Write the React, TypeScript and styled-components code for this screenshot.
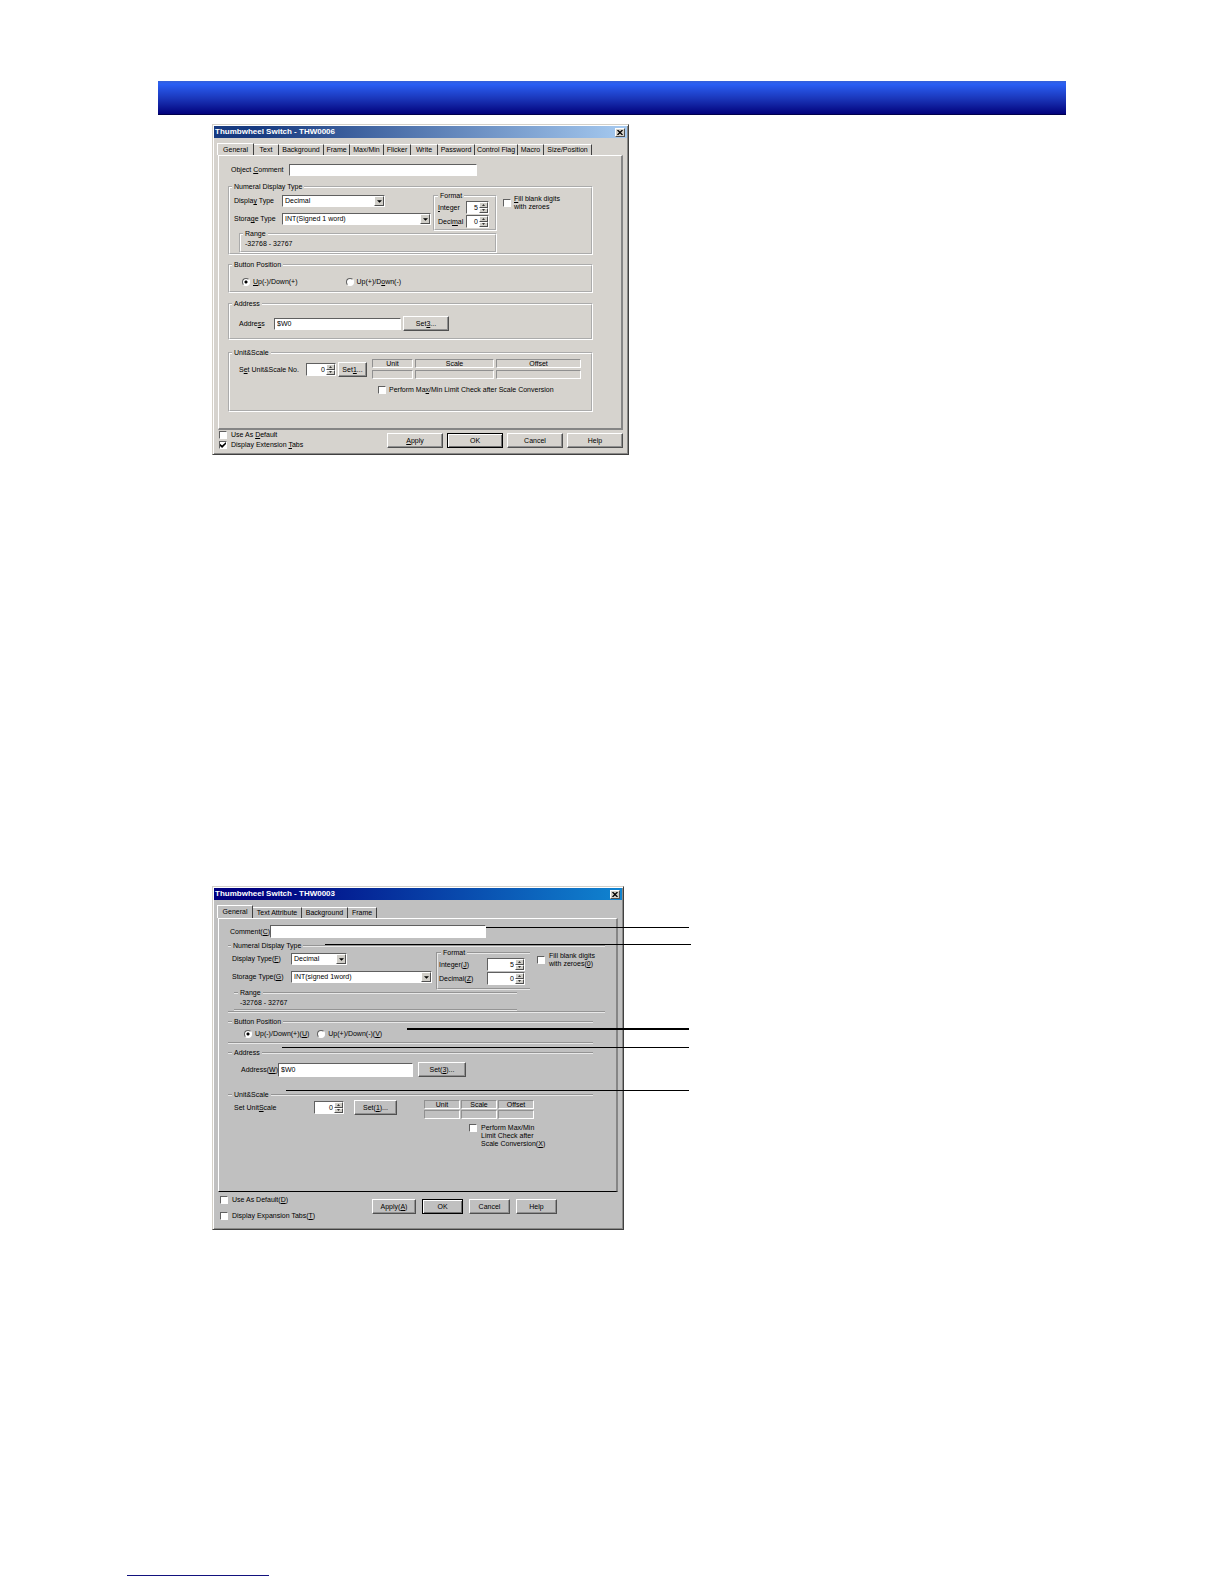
import { useState } from "react";
import styled, { createGlobalStyle, css } from "styled-components";

const GlobalStyle = createGlobalStyle`
    * {
        box-sizing: border-box;
    }

    body {
        margin: 0;
        background-color: #fff;
    }

    input, select, button {
        font: inherit;
        color: inherit;
        margin: 0;
        border-radius: 0;
    }
`

const StyledPage = styled.main`
    display: flex;
    flex-direction: column;
    min-height: 100vh;
    padding: 81px 158px 8px;
    font-family: "Liberation Sans", Arial, sans-serif;
    font-size: 7px;
    line-height: 8px;
    color: #000;
`

const StyledBanner = styled.header`
    height: 34px;
    background: linear-gradient(#3560d8 0, #2a5ff4 3px, #1a35b8 18px, #02027c 33px, #00004c 33px);
`

const StyledFigure = styled.section<{ $top: number; $width: number }>`
    position: relative;
    width: 100%;
    max-width: ${({ $width }) => $width}px;
    margin: ${({ $top }) => $top}px 0 0 54px;
`

const StyledDialog = styled.form<{ $face: string }>`
    border: 1px solid;
    border-color: #d4d0c8 #404040 #404040 #d4d0c8;
    box-shadow: inset 1px 1px #fff, inset -1px -1px #8a8a88;
    padding: 1px;
    background-color: ${({ $face }) => $face};
`

const StyledTitleBar = styled.div<{ $from: string; $to: string }>`
    display: flex;
    align-items: center;
    justify-content: space-between;
    height: 12px;
    padding: 0 2px 0 1px;
    background: linear-gradient(to right, ${({ $from }) => $from} 10%, ${({ $to }) => $to});
`

const StyledTitle = styled.h2`
    margin: 0;
    font-size: 8px;
    line-height: 12px;
    font-weight: bold;
    color: #fff;
`

const raised = css`
    border: 1px solid;
    border-color: #fff #505050 #505050 #fff;
    background-color: inherit;
    padding: 0;
`

const sunken = css`
    border: 1px solid;
    border-color: #606060 #fff #fff #606060;
    background-color: #fff;
`

const StyledClose = styled.button`
    ${raised}
    display: flex;
    align-items: center;
    justify-content: center;
    width: 10px;
    height: 9px;
    background-color: #d4d0c8;
`

const StyledTabs = styled.div<{ $height: number }>`
    display: flex;
    align-items: flex-end;
    height: ${({ $height }) => $height}px;
    margin-top: 5px;
    padding-left: 3px;
`

const StyledTab = styled.button<{ $width: number; $active?: boolean }>`
    flex: 0 1 ${({ $width }) => $width}px;
    height: 11px;
    padding: 0;
    border: solid;
    border-width: 1px 1px 0 0;
    border-color: #fff #404040;
    background-color: transparent;
    white-space: nowrap;

    ${({ $active }) => $active && css`
        border-left: 1px solid #fff;
        height: 100%;
    `}
`

const StyledPanel = styled.div<{ $padding: string; $bottom: string }>`
    margin: 0 4px;
    padding: ${({ $padding }) => $padding};
    border: solid;
    border-width: 1px 2px 1px 1px;
    border-color: #fff #858585 #858585 #fff;
    border-bottom: ${({ $bottom }) => $bottom};
`

const StyledRow = styled.div<{ $gap?: number; $padding?: string }>`
    display: flex;
    align-items: center;
    gap: ${({ $gap }) => $gap || 0}px;
    padding: ${({ $padding }) => $padding || 0};
`

const StyledTopRow = styled(StyledRow)`
    align-items: flex-start;
`

const StyledStack = styled.div<{ $gap?: number; $padding?: string; $width?: number }>`
    display: flex;
    flex-direction: column;
    gap: ${({ $gap }) => $gap || 0}px;
    padding: ${({ $padding }) => $padding || 0};
    width: ${({ $width }) => ($width ? `${$width}px` : "auto")};
`

const StyledLabel = styled.label<{ $width?: number }>`
    flex: none;
    width: ${({ $width }) => ($width ? `${$width}px` : "auto")};
    white-space: nowrap;
`

const StyledInput = styled.input<{ $width: number; $height?: number }>`
    ${sunken}
    width: ${({ $width }) => $width}px;
    min-width: 0;
    height: ${({ $height }) => $height || 12}px;
    padding: 0 2px;
`

const StyledGroup = styled.fieldset<{ $top: number; $edges?: string; $right?: number; $left?: number }>`
    min-width: 0;
    margin: ${({ $top, $right = 0, $left = 0 }) => `${$top}px ${$right}px 0 ${$left}px`};
    padding: 0;
    border: groove ${({ $edges }) => ($edges ? "#e8e8e8" : "#fff")};
    border-width: ${({ $edges }) => $edges || "2px"};
`

const StyledLegend = styled.legend<{ $indent?: number }>`
    height: 8px;
    margin-left: ${({ $indent }) => $indent || 2}px;
    padding: 0 2px;
`

const StyledSelectBox = styled.span<{ $width: number }>`
    position: relative;
    width: ${({ $width }) => $width}px;
    height: 12px;
`

const StyledSelect = styled.select`
    ${sunken}
    display: block;
    appearance: none;
    width: 100%;
    height: 12px;
    padding: 0 12px 0 2px;
`

const StyledArrow = styled.span`
    ${raised}
    position: absolute;
    top: 1px;
    right: 1px;
    display: flex;
    align-items: center;
    justify-content: center;
    width: 10px;
    height: 10px;
    background-color: #d0cec8;
    pointer-events: none;
`

const StyledSpin = styled.span<{ $width: number }>`
    ${sunken}
    display: flex;
    flex: none;
    width: ${({ $width }) => $width}px;
    height: 13px;

    input {
        flex: 1;
        min-width: 0;
        padding: 0 1px;
        border: 0;
        background: none;
        text-align: right;
    }
`

const StyledSpinButtons = styled.span`
    display: grid;
    grid-template-rows: 1fr 1fr;
    width: 9px;

    button {
        ${raised}
        display: flex;
        align-items: center;
        justify-content: center;
        min-height: 0;
        background-color: #d0cec8;
    }
`

const StyledCheck = styled.label<{ $gap?: number }>`
    display: flex;
    align-items: center;
    gap: ${({ $gap }) => $gap || 3}px;
    white-space: nowrap;
`

const StyledCheckTop = styled(StyledCheck)`
    align-items: flex-start;
`

const StyledCheckbox = styled.input`
    ${sunken}
    flex: none;
    appearance: none;
    width: 8px;
    height: 8px;

    &:checked::after {
        content: "";
        display: block;
        width: 6px;
        height: 6px;
        background-color: #000;
        clip-path: polygon(0 30%, 35% 60%, 100% 0, 100% 35%, 35% 100%, 0 65%);
    }
`

const StyledRadio = styled.input`
    ${sunken}
    flex: none;
    appearance: none;
    width: 8px;
    height: 8px;
    border-radius: 50%;

    &:checked {
        background-image: radial-gradient(circle, #000 0 1px, transparent 2px);
    }
`

const StyledButton = styled.button<{ $width: number; $default?: boolean }>`
    ${raised}
    width: ${({ $width }) => $width}px;
    height: 15px;
    box-shadow: inset -1px -1px #909090;
    white-space: nowrap;

    ${({ $default }) => $default && css`
        border-color: #000;
        box-shadow: inset 1px 1px #fff, inset -1px -1px #707070;
    `}
`

const StyledTable = styled.table`
    align-self: flex-start;
    border-collapse: separate;

    th, td {
        height: 9px;
        padding: 0;
        border: 1px solid;
        border-color: #909090 #fff #fff #909090;
        font-weight: normal;
        line-height: 7px;
    }
`

const StyledFooter = styled.div<{ $padding: string }>`
    display: flex;
    align-items: flex-start;
    padding: ${({ $padding }) => $padding};
`

const StyledCallout = styled.span<{ $left: number; $top: number; $width: number; $thick?: boolean }>`
    position: absolute;
    left: ${({ $left }) => $left}px;
    top: ${({ $top }) => $top}px;
    width: ${({ $width }) => $width}px;
    height: ${({ $thick }) => ($thick ? 2 : 1)}px;
    background-color: #000;
`

const StyledFootLink = styled.a`
    width: 142px;
    margin: auto 0 0 -31px;
    border-bottom: 1px solid #12127e;
`

// "_" goes before the access key letter
const Mnemonic = ({ text }: { text: string }) => {
    const at = text.indexOf("_");
    if (at < 0) return <>{text}</>;
    return <>{text.slice(0, at)}<u>{text[at + 1]}</u>{text.slice(at + 2)}</>;
}

const Triangle = ({ up, size = 5 }: { up?: boolean; size?: number }) => (
    <svg width={size} height={size === 5 ? 3 : 2} viewBox="0 0 6 3" aria-hidden="true">
        <path d={up ? "M0 3h6L3 0z" : "M0 0h6L3 3z"} />
    </svg>
)

const TitleBar = ({ title, from, to }: { title: string; from: string; to: string }) => (
    <StyledTitleBar $from={from} $to={to}>
        <StyledTitle>{title}</StyledTitle>
        <StyledClose type="button" aria-label="Close">
            <svg width="6" height="5" viewBox="0 0 6 5" aria-hidden="true">
                <path d="M0.5 0L5.5 5M5.5 0L0.5 5" stroke="#000" strokeWidth="1.3" />
            </svg>
        </StyledClose>
    </StyledTitleBar>
)

const Tabs = ({ tabs, height }: { tabs: [string, number][]; height: number }) => (
    <StyledTabs role="tablist" $height={height}>
        {tabs.map(([name, width], i) => (
            <StyledTab key={name} type="button" role="tab" aria-selected={i === 0} $width={width} $active={i === 0}>
                {name}
            </StyledTab>
        ))}
    </StyledTabs>
)

const Select = ({ id, width, value }: { id: string; width: number; value: string }) => (
    <StyledSelectBox $width={width}>
        <StyledSelect id={id}>
            <option>{value}</option>
        </StyledSelect>
        <StyledArrow><Triangle /></StyledArrow>
    </StyledSelectBox>
)

const Spin = ({ id, width, initial }: { id: string; width: number; initial: number }) => {
    const [value, setValue] = useState(initial);

    return (
        <StyledSpin $width={width}>
            <input id={id} value={value} onChange={(e) => setValue(Number(e.target.value) || 0)} />
            <StyledSpinButtons>
                <button type="button" aria-label="Increase" onClick={() => setValue(value + 1)}><Triangle up size={3} /></button>
                <button type="button" aria-label="Decrease" onClick={() => setValue(value - 1)}><Triangle size={3} /></button>
            </StyledSpinButtons>
        </StyledSpin>
    );
}

const ScaleTable = ({ widths, gap }: { widths: number[]; gap: number }) => (
    <StyledTable cellSpacing={gap}>
        <thead>
            <tr>
                {["Unit", "Scale", "Offset"].map((name, i) => <th key={name} style={{ width: widths[i] }}>{name}</th>)}
            </tr>
        </thead>
        <tbody>
            <tr><td /><td /><td /></tr>
        </tbody>
    </StyledTable>
)

const extendedTabs: [string, number][] = [
    ["General", 37], ["Text", 25], ["Background", 45], ["Frame", 26], ["Max/Min", 34], ["Flicker", 27],
    ["Write", 27], ["Password", 37], ["Control Flag", 43], ["Macro", 26], ["Size/Position", 48],
];

const basicTabs: [string, number][] = [
    ["General", 36], ["Text Attribute", 49], ["Background", 46], ["Frame", 29],
];

const ExtendedDialog = () => (
    <StyledDialog $face="#d6d3ce" onSubmit={(e) => e.preventDefault()}>
        <TitleBar title="Thumbwheel Switch - THW0006" from="#173a80" to="#a6caf0" />
        <Tabs tabs={extendedTabs} height={12} />
        <StyledPanel $padding="8px 28px 16px 9px" $bottom="2px solid #858585">
            <StyledRow $padding="0 0 0 3px">
                <StyledLabel htmlFor="a-comment" $width={58}><Mnemonic text="Object _Comment" /></StyledLabel>
                <StyledInput id="a-comment" $width={188} />
            </StyledRow>

            <StyledGroup $top={7}>
                <StyledLegend>Numeral Display Type</StyledLegend>
                <StyledTopRow>
                    <StyledStack $gap={6} $width={203} $padding="4px 2px 0 4px">
                        <StyledRow>
                            <StyledLabel htmlFor="a-display" $width={48}><Mnemonic text="Displa_y Type" /></StyledLabel>
                            <Select id="a-display" width={103} value="Decimal" />
                        </StyledRow>
                        <StyledRow>
                            <StyledLabel htmlFor="a-storage" $width={48}><Mnemonic text="Stora_ge Type" /></StyledLabel>
                            <Select id="a-storage" width={149} value="INT(Signed 1 word)" />
                        </StyledRow>
                    </StyledStack>
                    <StyledGroup $top={1}>
                        <StyledLegend $indent={3}>Format</StyledLegend>
                        <StyledStack $gap={1} $padding="1px 6px 1px 3px">
                            <StyledRow>
                                <StyledLabel htmlFor="a-integer" $width={28}><Mnemonic text="_Integer" /></StyledLabel>
                                <Spin id="a-integer" width={23} initial={5} />
                            </StyledRow>
                            <StyledRow>
                                <StyledLabel htmlFor="a-decimal" $width={28}><Mnemonic text="Deci_mal" /></StyledLabel>
                                <Spin id="a-decimal" width={23} initial={0} />
                            </StyledRow>
                        </StyledStack>
                    </StyledGroup>
                    <StyledRow $padding="4px 0 0 6px">
                        <StyledCheck>
                            <StyledCheckbox type="checkbox" />
                            <span><Mnemonic text="_Fill blank digits" /><br />with zeroes</span>
                        </StyledCheck>
                    </StyledRow>
                </StyledTopRow>
                <StyledGroup $top={-1} $left={9} $right={94}>
                    <StyledLegend>Range</StyledLegend>
                    <StyledRow $padding="2px 4px 3px">-32768 - 32767</StyledRow>
                </StyledGroup>
            </StyledGroup>

            <StyledGroup $top={6}>
                <StyledLegend>Button Position</StyledLegend>
                <StyledRow $padding="9px 0 5px 12px" $gap={48}>
                    <StyledCheck>
                        <StyledRadio type="radio" name="a-position" defaultChecked />
                        <span><Mnemonic text="_Up(-)/Down(+)" /></span>
                    </StyledCheck>
                    <StyledCheck>
                        <StyledRadio type="radio" name="a-position" />
                        <span><Mnemonic text="Up(+)/D_own(-)" /></span>
                    </StyledCheck>
                </StyledRow>
            </StyledGroup>

            <StyledGroup $top={7}>
                <StyledLegend>Address</StyledLegend>
                <StyledRow $padding="8px 0 7px 9px">
                    <StyledLabel htmlFor="a-address" $width={35}><Mnemonic text="Addre_ss" /></StyledLabel>
                    <StyledInput id="a-address" defaultValue="$W0" $width={127} />
                    <StyledRow $padding="0 0 0 2px">
                        <StyledButton type="button" $width={46}><Mnemonic text="Set_3..." /></StyledButton>
                    </StyledRow>
                </StyledRow>
            </StyledGroup>

            <StyledGroup $top={9}>
                <StyledLegend>Unit&amp;Scale</StyledLegend>
                <StyledTopRow $padding="0 0 16px 9px">
                    <StyledRow $padding="5px 3px 0 0">
                        <StyledLabel htmlFor="a-unit" $width={67}><Mnemonic text="S_et Unit&Scale No." /></StyledLabel>
                        <Spin id="a-unit" width={30} initial={0} />
                        <StyledRow $padding="0 0 0 2px">
                            <StyledButton type="button" $width={29}><Mnemonic text="Set_1..." /></StyledButton>
                        </StyledRow>
                    </StyledRow>
                    <StyledStack $gap={5}>
                        <ScaleTable widths={[41, 79, 85]} gap={2} />
                        <StyledRow $padding="0 0 0 8px">
                            <StyledCheck>
                                <StyledCheckbox type="checkbox" />
                                <span><Mnemonic text="Perform Ma_x/Min Limit Check after Scale Conversion" /></span>
                            </StyledCheck>
                        </StyledRow>
                    </StyledStack>
                </StyledTopRow>
            </StyledGroup>
        </StyledPanel>

        <StyledFooter $padding="0 4px 4px 5px">
            <StyledStack $gap={2} $width={169} $padding="1px 0 0">
                <StyledCheck $gap={4}>
                    <StyledCheckbox type="checkbox" />
                    <span><Mnemonic text="Use As _Default" /></span>
                </StyledCheck>
                <StyledCheck $gap={4}>
                    <StyledCheckbox type="checkbox" defaultChecked />
                    <span><Mnemonic text="Display Extension _Tabs" /></span>
                </StyledCheck>
            </StyledStack>
            <StyledRow $gap={4} $padding="3px 0 0">
                <StyledButton type="button" $width={56}><Mnemonic text="_Apply" /></StyledButton>
                <StyledButton type="submit" $width={56} $default>OK</StyledButton>
                <StyledButton type="button" $width={56}>Cancel</StyledButton>
                <StyledButton type="button" $width={56}>Help</StyledButton>
            </StyledRow>
        </StyledFooter>
    </StyledDialog>
)

const BasicDialog = () => (
    <StyledDialog $face="#c0c0c0" onSubmit={(e) => e.preventDefault()}>
        <TitleBar title="Thumbwheel Switch - THW0003" from="#000080" to="#1084d0" />
        <Tabs tabs={basicTabs} height={13} />
        <StyledPanel $padding="6px 11px 43px 9px" $bottom="1px solid #000">
            <StyledRow $padding="0 0 0 2px">
                <StyledLabel htmlFor="b-comment" $width={40}><Mnemonic text="Comment(_C)" /></StyledLabel>
                <StyledInput id="b-comment" $width={216} $height={13} />
            </StyledRow>

            <StyledGroup $top={4} $edges="2px 0">
                <StyledLegend $indent={3}>Numeral Display Type</StyledLegend>
                <StyledTopRow>
                    <StyledStack $gap={6} $width={208} $padding="3px 4px 0 4px">
                        <StyledRow>
                            <StyledLabel htmlFor="b-display" $width={59}><Mnemonic text="Display Type(_F)" /></StyledLabel>
                            <Select id="b-display" width={56} value="Decimal" />
                        </StyledRow>
                        <StyledRow>
                            <StyledLabel htmlFor="b-storage" $width={59}><Mnemonic text="Storage Type(_G)" /></StyledLabel>
                            <Select id="b-storage" width={141} value="INT(signed 1word)" />
                        </StyledRow>
                    </StyledStack>
                    <StyledGroup $top={-1} $edges="2px 0 2px 2px">
                        <StyledLegend $indent={3}>Format</StyledLegend>
                        <StyledStack $gap={1} $padding="1px 5px 3px 1px">
                            <StyledRow>
                                <StyledLabel htmlFor="b-integer" $width={48}><Mnemonic text="Integer(_J)" /></StyledLabel>
                                <Spin id="b-integer" width={38} initial={5} />
                            </StyledRow>
                            <StyledRow>
                                <StyledLabel htmlFor="b-decimal" $width={48}><Mnemonic text="Decimal(_Z)" /></StyledLabel>
                                <Spin id="b-decimal" width={38} initial={0} />
                            </StyledRow>
                        </StyledStack>
                    </StyledGroup>
                    <StyledRow $padding="2px 0 0 7px">
                        <StyledCheck $gap={4}>
                            <StyledCheckbox type="checkbox" />
                            <span>Fill blank digits<br /><Mnemonic text="with zeroes(_0)" /></span>
                        </StyledCheck>
                    </StyledRow>
                </StyledTopRow>
                <StyledGroup $top={-1} $edges="2px 0" $left={6} $right={88}>
                    <StyledLegend $indent={4}>Range</StyledLegend>
                    <StyledRow $padding="2px 6px">-32768 - 32767</StyledRow>
                </StyledGroup>
            </StyledGroup>

            <StyledGroup $top={5} $edges="2px 0" $right={12}>
                <StyledLegend $indent={4}>Button Position</StyledLegend>
                <StyledRow $padding="4px 0 4px 16px" $gap={8}>
                    <StyledCheck>
                        <StyledRadio type="radio" name="b-position" defaultChecked />
                        <span><Mnemonic text="Up(-)/Down(+)(_U)" /></span>
                    </StyledCheck>
                    <StyledCheck>
                        <StyledRadio type="radio" name="b-position" />
                        <span><Mnemonic text="Up(+)/Down(-)(_V)" /></span>
                    </StyledCheck>
                </StyledRow>
            </StyledGroup>

            <StyledGroup $top={5} $edges="2px 0 0" $right={12}>
                <StyledLegend $indent={4}>Address</StyledLegend>
                <StyledRow $padding="5px 0 0 13px">
                    <StyledLabel htmlFor="b-address" $width={37}><Mnemonic text="Address(_W)" /></StyledLabel>
                    <StyledInput id="b-address" defaultValue="$W0" $width={135} $height={14} />
                    <StyledRow $padding="0 0 0 5px">
                        <StyledButton type="button" $width={48}><Mnemonic text="Set(_3)..." /></StyledButton>
                    </StyledRow>
                </StyledRow>
            </StyledGroup>

            <StyledGroup $top={14} $edges="2px 0 0" $right={12}>
                <StyledLegend $indent={4}>Unit&amp;Scale</StyledLegend>
                <StyledTopRow $padding="0 0 0 6px">
                    <StyledRow $padding="1px 26px 0 0">
                        <StyledLabel htmlFor="b-unit" $width={80}><Mnemonic text="Set Unit_Scale" /></StyledLabel>
                        <Spin id="b-unit" width={30} initial={0} />
                        <StyledRow $padding="0 0 0 10px">
                            <StyledButton type="button" $width={43}><Mnemonic text="Set(_1)..." /></StyledButton>
                        </StyledRow>
                    </StyledRow>
                    <StyledStack $gap={4}>
                        <ScaleTable widths={[36, 36, 36]} gap={1} />
                        <StyledRow $padding="0 0 0 46px">
                            <StyledCheckTop $gap={4}>
                                <StyledCheckbox type="checkbox" />
                                <span>
                                    Perform Max/Min<br />
                                    Limit Check after<br />
                                    <Mnemonic text="Scale Conversion(_X)" />
                                </span>
                            </StyledCheckTop>
                        </StyledRow>
                    </StyledStack>
                </StyledTopRow>
            </StyledGroup>
        </StyledPanel>

        <StyledFooter $padding="4px 4px 8px 6px">
            <StyledStack $gap={8} $width={152}>
                <StyledCheck $gap={4}>
                    <StyledCheckbox type="checkbox" />
                    <span><Mnemonic text="Use As Default(_D)" /></span>
                </StyledCheck>
                <StyledCheck $gap={4}>
                    <StyledCheckbox type="checkbox" />
                    <span><Mnemonic text="Display Expansion Tabs(_T)" /></span>
                </StyledCheck>
            </StyledStack>
            <StyledRow $gap={6} $padding="3px 0 0">
                <StyledButton type="button" $width={44}><Mnemonic text="Apply(_A)" /></StyledButton>
                <StyledButton type="submit" $width={41} $default>OK</StyledButton>
                <StyledButton type="button" $width={41}>Cancel</StyledButton>
                <StyledButton type="button" $width={41}>Help</StyledButton>
            </StyledRow>
        </StyledFooter>
    </StyledDialog>
)

const App = () => (
    <>
        <GlobalStyle />
        <StyledPage>
            <StyledBanner />
            <StyledFigure $top={9} $width={417}>
                <ExtendedDialog />
            </StyledFigure>
            <StyledFigure $top={431} $width={412}>
                <BasicDialog />
                <StyledCallout $left={274} $top={41} $width={203} />
                <StyledCallout $left={113} $top={58} $width={366} />
                <StyledCallout $left={195} $top={142} $width={282} $thick />
                <StyledCallout $left={70} $top={161} $width={407} />
                <StyledCallout $left={74} $top={204} $width={403} />
            </StyledFigure>
            <StyledFootLink href="#top" aria-label="Back to top" />
        </StyledPage>
    </>
);

export default App;
